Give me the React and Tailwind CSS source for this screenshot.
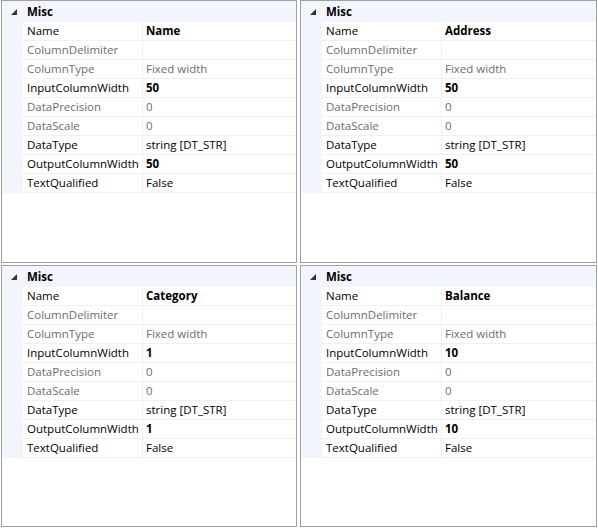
import React from "react";

const panels = [
  { name: "Name", iw: "50", ow: "50" },
  { name: "Address", iw: "50", ow: "50" },
  { name: "Category", iw: "1", ow: "1" },
  { name: "Balance", iw: "10", ow: "10" },
];

function rowsFor(p) {
  return [
    { k: "Name", v: p.name, bold: true },
    { k: "ColumnDelimiter", v: "", gray: true },
    { k: "ColumnType", v: "Fixed width", gray: true },
    { k: "InputColumnWidth", v: p.iw, bold: true },
    { k: "DataPrecision", v: "0", gray: true },
    { k: "DataScale", v: "0", gray: true },
    { k: "DataType", v: "string [DT_STR]" },
    { k: "OutputColumnWidth", v: p.ow, bold: true },
    { k: "TextQualified", v: "False" },
  ];
}

function Panel({ p }) {
  return (
    <div className="border border-[#a0a0a0] bg-white overflow-hidden">
      <div className="flex h-[21px] items-center bg-[#f2f5fb]">
        <div className="w-[21px] h-full flex items-center justify-center">
          <svg width="6" height="6" viewBox="0 0 6 6" className="ml-[2px]">
            <polygon points="0,6 6,6 6,0" fill="#333" />
          </svg>
        </div>
        <div className="pl-[4px] font-bold text-black">Misc</div>
      </div>
      {rowsFor(p).map((r) => (
        <div key={r.k} className="flex h-[19px]">
          <div className="w-[21px] bg-[#f2f5fb] shrink-0" />
          <div className="flex flex-1 border-b border-[#f0f0f0]">
            <div
              className={
                "w-[119px] shrink-0 pl-[4px] leading-[18px] whitespace-nowrap overflow-hidden " +
                (r.gray ? "text-[#6d6d6d]" : "text-black")
              }
            >
              {r.k}
            </div>
            <div
              className={
                "flex-1 border-l border-[#f0f0f0] pl-[3px] leading-[18px] whitespace-nowrap " +
                (r.gray ? "text-[#6d6d6d] " : "text-black ") +
                (r.bold ? "font-bold" : "")
              }
            >
              {r.v}
            </div>
          </div>
        </div>
      ))}
    </div>
  );
}

export default function App() {
  return (
    <div
      className="w-[598px] h-[528px] bg-white pl-[1px] grid grid-cols-[296px_297px] grid-rows-[263px_262px] gap-x-[3px] gap-y-[2px] text-[11.5px]"
      style={{ fontFamily: '"Open Sans", "Noto Sans", sans-serif' }}
    >
      {panels.map((p) => (
        <Panel key={p.name} p={p} />
      ))}
    </div>
  );
}
